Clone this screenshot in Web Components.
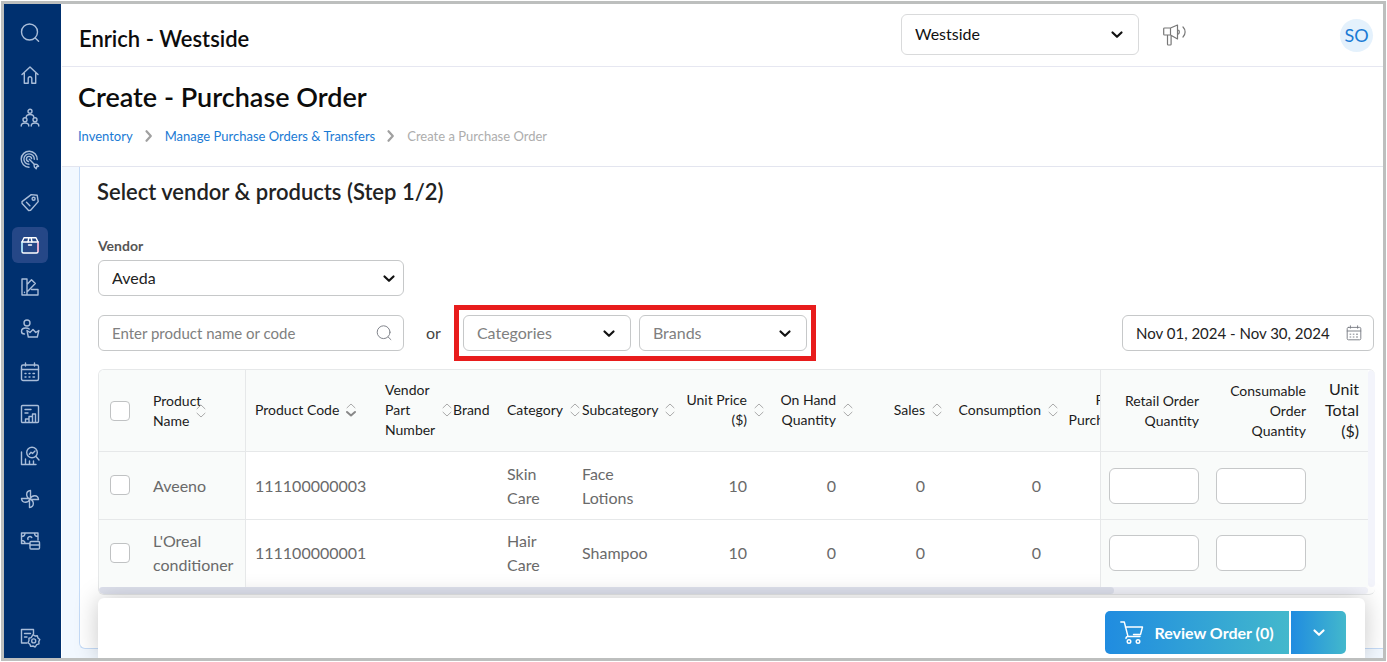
<!DOCTYPE html>
<html lang="en">
<head>
<meta charset="utf-8">
<title>Create - Purchase Order</title>
<style>
  html { background: #fff; }
  body { margin: 0; font-family: Lato, "Open Sans", sans-serif; color: #1f2223; }
</style>
</head>
<body>
<app-shell>
  <side-nav slot="nav"></side-nav>
  <top-bar slot="top"></top-bar>
  <page-heading slot="heading"></page-heading>
  <order-form slot="content"></order-form>
  <action-bar slot="actions"></action-bar>
</app-shell>

<script>
const ICONS = {
  search: '<circle cx="9.5" cy="9" r="8"/><path d="M15.2 15l3.4 3.3"/>',
  home: '<path d="M2 9.6L10 2l8 7.6M4.300 8v10.200h3.900v-4.700a1.800 1.800 0 0 1 3.600 0v4.700h3.900V8"/>',
  team: '<circle cx="10" cy="3.300" r="2"/><path d="M6.200 9.300c0-2 1.600-2.800 3.800-2.800s3.800.8 3.800 2.800"/><circle cx="5" cy="11.800" r="2"/><circle cx="15" cy="11.800" r="2"/><path d="M1.200 18c0-2.200 1.600-3 3.800-3s3.800.8 3.800 3M11.200 18c0-2.200 1.600-3 3.800-3s3.800.8 3.800 3"/>',
  target: '<path d="M9 17.200A8 8 0 1 1 17.200 9.500"/><path d="M9 14.300A5.200 5.200 0 1 1 14.300 9.300"/><path d="M8.500 11.500A2.600 2.600 0 1 1 11.600 8.600"/><path d="M9.300 9.200l5.200 5.200M14 14.500l.4 2.500 1.800 1.700.5-1.900 1.900-.5-1.700-1.800-2.500-.4z"/>',
  tag: '<path d="M2 9.600L11.200 2.600l6 .7 1 6.300-7.600 8.600-2 .3-6.500-7z"/><circle cx="13.600" cy="6.700" r="1.500"/><path d="M6.500 10.300l3.400 3.500"/>',
  box: '<path d="M2 7h16v9.500a1.500 1.500 0 0 1-1.500 1.500h-13A1.500 1.500 0 0 1 2 16.500z"/><path d="M2 7v9.500" stroke="#8fd8f5"/><path d="M18 7v9.500" stroke="#f0a0c8"/><path d="M2 7l2-4.300h12L18 7M8 7l.8-4M12 7l-.8-4M8.500 10h3"/>',
  swatch: '<path d="M2 2h5v16H2zM7 7.500l4.500-4.800 3.800 3.700L7 15M11.500 12.500H18V18H2M4.500 15.300v.3"/>',
  loyalty: '<circle cx="7" cy="4" r="3"/><path d="M4.500 15C2.500 15 1.500 14 1.500 12.500c0-2.200 1.900-3.500 4.200-3.500 1.500 0 2.600.3 3.500 1M7 11.500l3 2 3-3 2.800 3 3-2-1.500 6.500H8.300z"/>',
  calendar: '<rect x="1.500" y="3" width="17" height="15.500" rx="1.500"/><path d="M1.500 7.500h17M5.500 1v3M14.500 1v3"/><path d="M5 11.500h1M9 11.500h1M13 11.500h1.500M5 15h1M9 15h1M13 15h1.500"/>',
  report: '<rect x="1.500" y="1.500" width="17" height="17" rx="1"/><path d="M5 5.500h6M5 9h3M5.500 18v-3h3.500v-2.500h3.500V10h3v8M9 15v3M12.500 12.500V18"/>',
  analytics: '<path d="M1.500 6v12.500M1.500 18.500H16M5.500 18v-5M9.500 18v-3M13.500 18v-3"/><circle cx="12" cy="6.500" r="5.300"/><path d="M16 10.500l3 3.500M9.300 8.200l1.700-2 1.500 1.200L15 5"/>',
  fan: '<path d="M10 10C5.500 8 5.500 2 10.500 1.500V10M10 10c2-4.500 8-4.500 8.500.5H10M10 10c4.500 2 4.500 8-.5 8.500V10M10 10c-2 4.500-8 4.500-8.500-.5H10"/>',
  money: '<path d="M9.500 12.500h-8V2H18v7M1.500 5.500C3.500 5.500 5 4 5 2M14.500 2c0 2 1.500 3.500 3.500 3.500M1.500 9.500c2 0 3.500 1 3.500 3M8 8.500C7 6 10 4.500 11.800 6.500"/><rect x="10" y="10.500" width="9.500" height="7.500" rx="1"/><path d="M10 14h9.500"/>',
  settings: '<path d="M7 15H1.500V1.500h12V6M4.500 5.500h6M4.500 9h2.500"/><path d="M13 6.700l2 1.300 2.300-.2.700 2.200 1.800 1.500-1 2.100.2 2.300-2.300.7L15.200 19 13 18l-2.300.4-.8-2.200L8 14.700l1-2.200-.1-2.300 2.300-.6z"/><circle cx="13.700" cy="12.900" r="2"/>',
  megaphone: '<path d="M1.500 4h6v7h-6a.8.8 0 0 1-.8-.8V4.800A.8.800 0 0 1 1.500 4zM7.500 4L14.500 1v14L7.500 11M4.500 11v9.200a.8.800 0 0 0 .8.800h2a.8.800 0 0 0 .8-.8V11.300M14.500 5.500a2.600 2.600 0 0 1 0 5M20 3a7 7 0 0 1 0 10"/>',
  cart: '<path d="M.8 1h3.500l3.700 14.500h12M5.300 6h17.200l-2 7.500h-7M8 15.500c-1.500 0-2 .8-2 2"/><circle cx="9" cy="20.500" r="1.800"/><circle cx="18" cy="20.500" r="1.800"/>',
  chevron: '<path d="M1.500 1.500l4.500 4.300 4.500-4.300"/>',
  crumb: '<path d="M1.500 1.200l4.300 4.800-4.300 4.800"/>',
  sort: '<path d="M1 4.800L5 1l4 3.800M1 9.200L5 13l4-3.800"/>',
  sorted: '<path d="M1 4.800L5 1l4 3.800"/><path d="M1 9l4 3.500L9 9" stroke="#888" stroke-width="2"/>'
};
const VIEW = { megaphone: '0 0 24 22', cart: '0 0 24 23', chevron: '0 0 12 8', crumb: '0 0 8 12', sort: '0 0 10 14', sorted: '0 0 10 14' };

function define(name, html, setup) {
  const template = document.createElement('template');
  customElements.define(name, class extends HTMLElement {
    constructor() { super(); this.attachShadow({ mode: 'open' }); }
    connectedCallback() {
      if (this.shadowRoot.childNodes.length) return;
      template.innerHTML = typeof html === 'function' ? html(this) : html;
      this.shadowRoot.append(template.content.cloneNode(true));
      if (setup) setup(this);
    }
  });
}

define('ui-icon', el => {
  const name = el.getAttribute('name');
  return `<style>
    :host { display: block; width: 20px; height: 20px; }
    svg { display: block; width: 100%; height: 100%; overflow: visible; fill: none; stroke: currentColor; stroke-width: var(--icon-stroke, 1.2); stroke-linejoin: round; stroke-linecap: round; }
  </style><svg viewBox="${VIEW[name] || '0 0 20 20'}" aria-hidden="true">${ICONS[name]}</svg>`;
});

define('app-shell', `<style>
  :host { display: grid; grid-template-columns: 57px minmax(0, 1fr); box-sizing: border-box; height: calc(100vh - 2px); margin: 1px; border: 3px solid #bdbfbe; background: #fff; overflow: hidden; }
  .main { display: flex; flex-direction: column; min-width: 0; min-height: 0; border-left: 1px solid #fff; }
  .view { position: relative; flex: 1; min-height: 0; overflow: hidden; background: #f2f8ff; }
  .bar { position: absolute; left: 36px; right: 18px; bottom: 0; }
  footer { text-align: right; font-size: 12px; line-height: 16px; padding: 3px 2px 0; color: #333; }
</style>
<slot name="nav"></slot>
<div class="main">
  <slot name="top"></slot>
  <slot name="heading"></slot>
  <main class="view"><slot name="content"></slot><footer>com</footer><div class="bar"><slot name="actions"></slot></div></main>
</div>`);

const NAV = [['search','Search'],['home','Home'],['team','Employees'],['target','Marketing'],['tag','Offers'],['box','Inventory'],['swatch','Services'],['loyalty','Loyalty'],['calendar','Appointments'],['report','Reports'],['analytics','Analytics'],['fan','Integrations'],['money','Finance']];
define('side-nav', () => `<style>
  :host { display: flex; min-height: 0; background: #00306f; --icon-stroke: 1.4; }
  nav { display: flex; flex-direction: column; flex: 1; padding: 11px 8px 2px; gap: 61px; }
  .list { display: flex; flex-direction: column; justify-content: space-between; flex: 1; }
  a { display: grid; place-items: center; width: 36px; height: 36px; border-radius: 6px; color: #a9bdd9; }
  a.on { background: #254787; color: #fff; }
</style>
<nav aria-label="Main"><div class="list">${NAV.map(([i, t]) => `<a href="#${i}" aria-label="${t}" class="${i === 'box' ? 'on' : ''}"><ui-icon name="${i}"></ui-icon></a>`).join('')}</div>
<a href="#settings" aria-label="Settings"><ui-icon name="settings"></ui-icon></a></nav>`);

define('ui-select', el => `<style>
  :host { display: block; position: relative; height: 36px; }
  select { appearance: none; box-sizing: border-box; width: 100%; height: 100%; margin: 0; padding: 0 36px 2px 13px; border: 1px solid var(--select-line, #c6c8c9); border-radius: 6px; background: #fff; font: 16px Lato, sans-serif; color: var(--select-color, #222); }
  ui-icon { position: absolute; top: 50%; right: var(--chevron-right, 16px); width: 12px; height: 8px; margin-top: -3px; pointer-events: none; color: #111; --icon-stroke: 2.2; }
</style>
<select aria-label="${el.getAttribute('label')}"><option>${el.getAttribute('value')}</option></select>
<ui-icon name="chevron"></ui-icon>`);

define('top-bar', `<style>
  :host { display: flex; align-items: center; box-sizing: border-box; height: 63px; padding: 0 10px 0 17px; border-bottom: 1px solid #e6e7f1; background: #fff; }
  h2 { flex: 1; margin: 8px 0 0; font-size: 22px; line-height: 28px; font-weight: 600; color: #0c0c0c; }
  ui-select { width: 238px; height: 41px; margin: 0 24px 2px 0; --select-color: #111; --select-line: #d9dadb; }
  button { border: 0; padding: 0; background: none; font: 18px Lato, sans-serif; }
  .news { color: #777; }
  .news ui-icon { width: 24px; height: 22px; --icon-stroke: 1.2; }
  .user { width: 33px; height: 33px; margin-left: 153px; border-radius: 50%; background: #e4f1fc; color: #1a7ad4; }
</style>
<h2>Enrich - Westside</h2>
<ui-select label="Center" value="Westside"></ui-select>
<button class="news" aria-label="Announcements"><ui-icon name="megaphone"></ui-icon></button>
<button class="user">SO</button>`);

define('page-heading', `<style>
  :host { display: block; padding: 14px 16px 20px; border-bottom: 1px solid #e3e5ef; background: #fff; }
  h1 { margin: 0 0 13px; font-size: 27px; line-height: 32px; font-weight: 600; color: #0c0c0c; }
  nav { display: flex; align-items: center; gap: 12px; font-size: 13px; line-height: 20px; color: #adadad; }
  a { color: #1a7ad4; text-decoration: none; }
  ui-icon { width: 8px; height: 12px; color: #a0a0a0; --icon-stroke: 2.2; }
</style>
<h1>Create - Purchase Order</h1>
<nav aria-label="Breadcrumb"><a href="#inventory">Inventory</a><ui-icon name="crumb"></ui-icon><a href="#orders">Manage Purchase Orders &amp; Transfers</a><ui-icon name="crumb"></ui-icon><span>Create a Purchase Order</span></nav>`);

define('ui-field', el => `<style>
  :host { display: block; position: relative; height: 36px; }
  input { box-sizing: border-box; width: 100%; height: 100%; margin: 0; padding: 0 36px 0 13px; border: 1px solid #c6c8c9; border-radius: 6px; background: #fff; font: 15px Lato, sans-serif; color: #222; }
  input::placeholder { color: #808080; opacity: 1; }
  ui-icon { position: absolute; top: 50%; right: 12px; width: 16px; height: 16px; margin-top: -8px; color: #7c8087; }
</style>
<input type="text" aria-label="${el.getAttribute('label')}" placeholder="${el.getAttribute('placeholder') || ''}" value="${el.getAttribute('value') || ''}">
<ui-icon name="${el.getAttribute('icon')}"></ui-icon>`);

define('order-form', `<style>
  :host { display: block; box-sizing: border-box; margin-left: 17px; padding: 11px 8px 53px 18px; border: solid #c5dbf7; border-width: 0 0 1px 1px; border-radius: 0 0 0 6px; background: #fff; }
  h2 { margin: 0 0 30px -1px; font-size: 22px; line-height: 28px; font-weight: 600; color: #222; }
  .label { margin: 0 0 4px; font-size: 14px; line-height: 20px; font-weight: 700; color: #555; }
  .wide { width: 306px; --chevron-right: 9px; }
  .filters { display: flex; align-items: center; margin: 9px 0 8px; font-size: 16px; color: #444; }
  .or { margin: 0 13px 2px 22px; }
  .pair { display: flex; gap: 8px; padding: 5px 4px; border: 5px solid #e81c1c; }
  .pair ui-select { width: 168px; --select-color: #808080; }
  .date { width: 252px; margin: 0 1px 0 auto; }
</style>
<h2>Select vendor &amp; products (Step 1/2)</h2>
<div class="label">Vendor</div>
<ui-select class="wide" label="Vendor" value="Aveda"></ui-select>
<div class="filters">
  <ui-field class="wide" label="Product" placeholder="Enter product name or code" icon="search"></ui-field>
  <span class="or">or</span>
  <div class="pair"><ui-select label="Categories" value="Categories"></ui-select><ui-select label="Brands" value="Brands"></ui-select></div>
  <ui-field class="date" label="Date range" value="Nov 01, 2024 - Nov 30, 2024" icon="calendar"></ui-field>
</div>
<product-table></product-table>`);

const ROWS = [
  ['Aveeno', '111100000003', 'Skin Care', 'Face Lotions'],
  ["L'Oreal conditioner", '111100000001', 'Hair Care', 'Shampoo']
];
const head = (text, cls = '', icon = 'sort') => `<th scope="col" class="${cls}"><span class="t">${text}${icon ? `<ui-icon name="${icon}"></ui-icon>` : ''}</span></th>`;
define('product-table', () => `<style>
  :host { display: grid; grid-template-columns: minmax(0, 1fr) 7px; border: 1px solid #e6e8e9; border-right: 0; border-radius: 6px; overflow: hidden; }
  .scroll { overflow: hidden; }
  table { width: 1584px; table-layout: fixed; border-collapse: separate; border-spacing: 0; }
  th, td { box-sizing: border-box; padding: 0 9px; text-align: left; vertical-align: middle; border-bottom: 1px solid #e6e8e9; background: #fff; }
  th { height: 82px; padding-bottom: 2px; background: #f9fbfa; font-size: 14px; line-height: 20px; font-weight: 400; color: #1c1c1c; }
  th.pin { padding-bottom: 0; }
  td { height: 68px; font-size: 16px; line-height: 24px; color: #6a6a6a; }
  tbody tr:last-child td { border-bottom: 0; height: 67px; padding-bottom: 2px; }
  .t { position: relative; display: inline-block; }
  .t ui-icon { position: absolute; left: 100%; top: 50%; width: 10px; height: 14px; margin: -7px 0 0 7px; color: #aaa; --icon-stroke: 1; }
  .name .t { width: 36px; }
  .n { text-align: right; }
  .pin { position: sticky; background: #f9fbfa; z-index: 1; }
  .check { left: 0; padding-left: 11px; } .name { left: 45px; border-right: 1px solid #e6e8e9; }
  .retail { right: 160px; border-left: 1px solid #e6e8e9; padding-left: 8px; } .cons { right: 53px; padding: 0 9px 0 8px; } .total { right: 0; }
  th.total { font-size: 16px; line-height: 21px; padding-bottom: 2px; }
  .qty { box-sizing: border-box; display: block; width: 90px; height: 36px; padding: 0 8px; border: 1px solid #c6c8c9; border-radius: 6px; background: #fff; }
  .box { appearance: none; display: block; box-sizing: border-box; width: 20px; height: 20px; margin: 0; border: 1px solid #c0c2c3; border-radius: 4px; background: #fff; }
  td.check { padding-bottom: 2px; }
  .v { border-radius: 4px; background: #f3f4fb; }
  .h { height: 7px; background: #f3f4fb; border-radius: 4px; }
  .thumb { width: 80%; height: 7px; border-radius: 4px; background: #dfe2ee; }
</style>
<div class="scroll"><table>
<colgroup>${[45,102,130,68,54,75,94,89,89,89,116,63,302,108,107,53].map(w => `<col style="width:${w}px">`).join('')}</colgroup>
<thead><tr>
<th class="pin check"><input class="box" type="checkbox" aria-label="Select all"></th>
${head('Product Name', 'pin name')}${head('Product Code', '', 'sorted')}${head('Vendor<br>Part<br>Number')}${head('Brand', '', '')}${head('Category')}${head('Subcategory')}${head('Unit Price<br>($)', 'n')}${head('On Hand<br>Quantity', 'n')}${head('Sales', 'n')}${head('Consumption', 'n')}${head('P<br>Purch', 'n', '')}<th></th>
${head('Retail Order<br>Quantity', 'pin n retail', '')}${head('Consumable<br>Order<br>Quantity', 'pin n cons', '')}${head('Unit<br>Total<br>($)', 'pin n total', '')}
</tr></thead>
<tbody>${ROWS.map(([name, code, cat, sub]) => `<tr>
<td class="pin check"><input class="box" type="checkbox" aria-label="Select ${name}"></td><td class="pin name">${name}</td><td>${code}</td><td></td><td></td><td>${cat}</td><td>${sub}</td><td class="n">10</td><td class="n">0</td><td class="n">0</td><td class="n">0</td><td></td><td></td>
<td class="pin retail"><input class="qty" type="text" aria-label="Retail quantity, ${name}"></td><td class="pin cons"><input class="qty" type="text" aria-label="Consumable quantity, ${name}"></td><td class="pin total"></td></tr>`).join('')}</tbody>
</table></div><div class="v"></div><div class="h"><div class="thumb"></div></div>`);

define('action-bar', `<style>
  :host { display: flex; justify-content: flex-end; gap: 2px; box-sizing: border-box; height: 60px; padding: 13px 19px 4px; border-radius: 6px 6px 0 0; background: #fff; box-shadow: 0 0 24px rgba(0, 0, 0, .22); }
  button { display: flex; align-items: center; justify-content: center; border: 0; padding: 0; color: #fff; background: linear-gradient(90deg, #208ce0, #43b8cc); font: 700 16px Lato, sans-serif; }
  .main { width: 184px; gap: 10px; border-radius: 5px 0 0 5px; }
  .more { width: 55px; border-radius: 0 5px 5px 0; }
  .main ui-icon { width: 24px; height: 23px; --icon-stroke: 1.4; }
  .more ui-icon { width: 12px; height: 8px; --icon-stroke: 2.2; }
</style>
<button class="main"><ui-icon name="cart"></ui-icon>Review Order (0)</button><button class="more" aria-label="More actions"><ui-icon name="chevron"></ui-icon></button>`);
</script>
</body>
</html>
